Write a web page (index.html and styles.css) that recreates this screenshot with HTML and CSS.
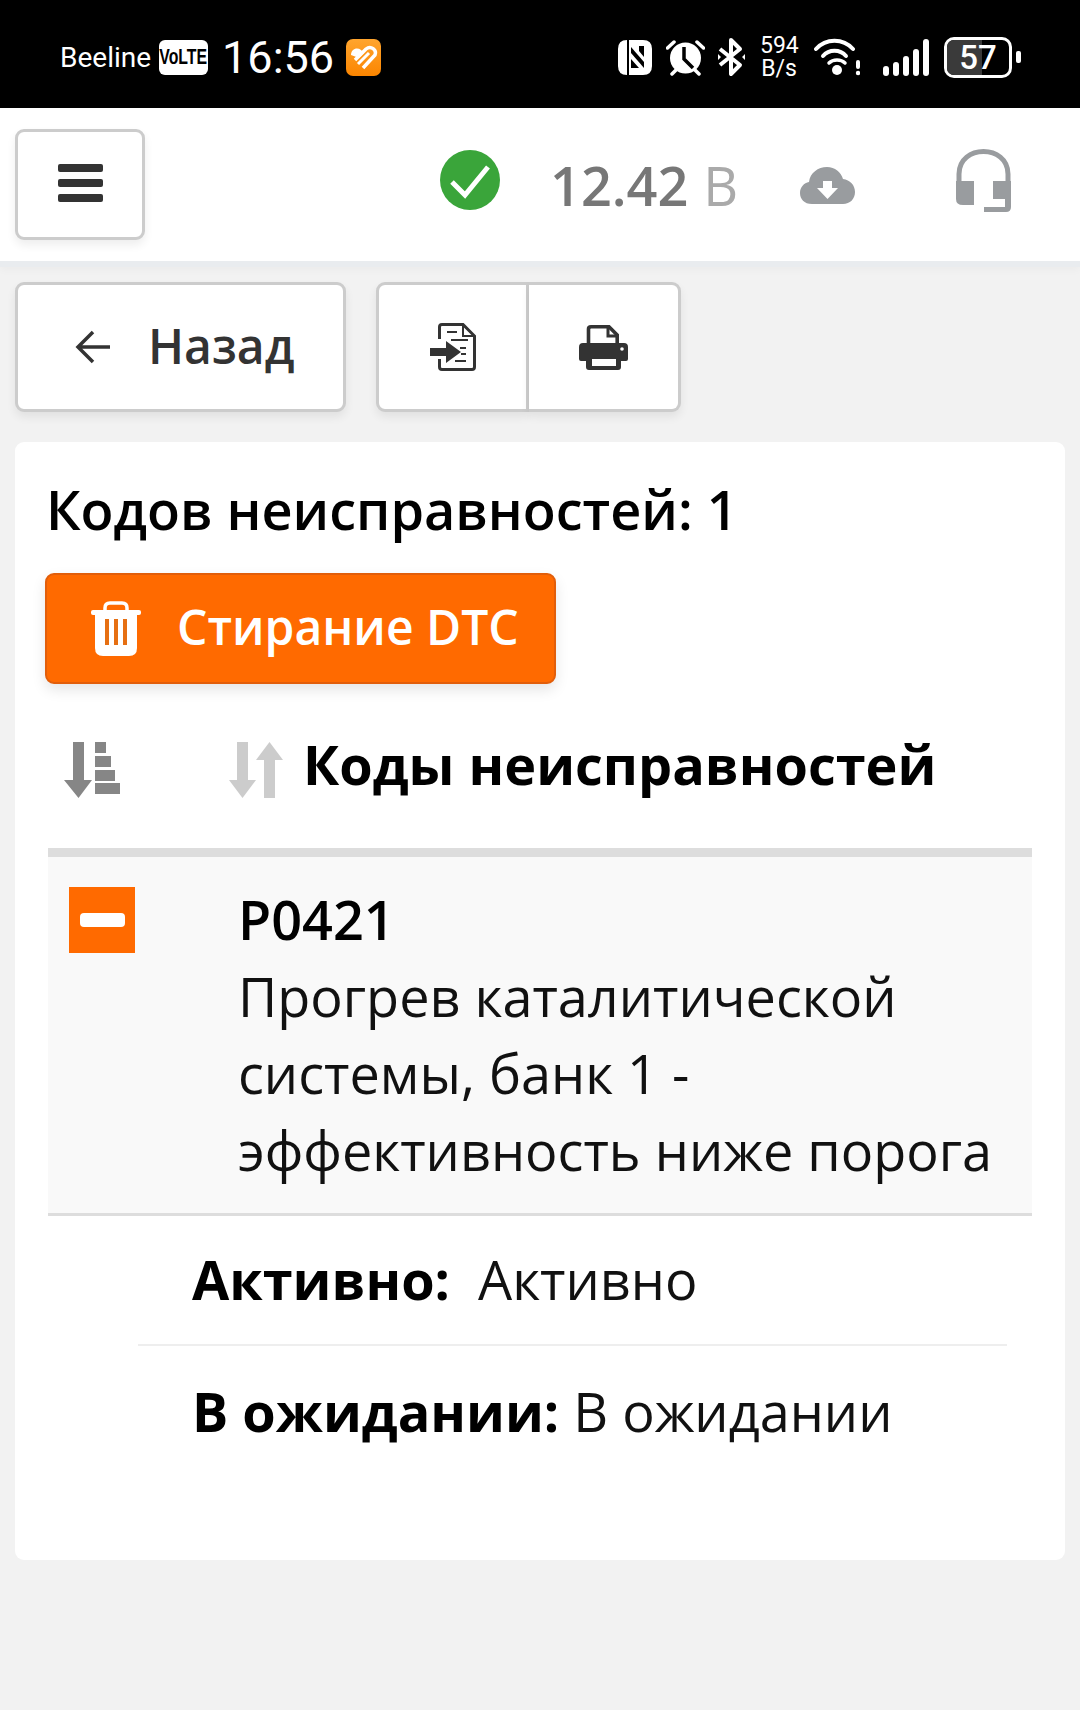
FILE: index.html
```html
<!DOCTYPE html>
<html lang="ru">
<head>
    <meta charset="UTF-8">
    <meta name="viewport" content="width=device-width, initial-scale=1.0">
    <title>Коды неисправностей</title>
    <link rel="stylesheet" href="styles.css">
</head>
<body>
    <!-- Phone status bar -->
    <div class="status-bar">
        <span class="carrier">Beeline</span>
        <span class="volte"><span>VoLTE</span></span>
        <span class="clock">16:56</span>
        <svg class="app-icon" width="35" height="37" viewBox="0 0 35 37">
            <defs>
                <linearGradient id="appGrad" x1="0" y1="0" x2="0" y2="1">
                    <stop offset="0" stop-color="#ffa52e"/>
                    <stop offset="1" stop-color="#fb8500"/>
                </linearGradient>
            </defs>
            <rect width="35" height="37" rx="7" fill="url(#appGrad)"/>
            <path d="M5 16 C5 10 11 8 15 11 L18 14 L13 19 Z" fill="#fff"/>
            <path d="M9 21 L20 10 C25 6 31 11 29 16 L17 29" fill="none" stroke="#fff" stroke-width="3.5"/>
            <path d="M12 25 L23 14" fill="none" stroke="#fff" stroke-width="3"/>
        </svg>

        <div class="status-icons">
            <svg class="ic-nfc" width="34" height="35" viewBox="0 0 34 35">
                <path d="M9 0 Q0 0 0 9 V26 Q0 35 9 35 Z" fill="#fff"/>
                <path d="M11 0 H25 Q34 0 34 9 V26 Q34 35 25 35 H11 Z" fill="#fff"/>
                <path d="M13 7 L26 22 V28 L13 13 Z" fill="#000"/>
                <path d="M13 19 L21 28 H13 Z M21 6 H26 V17 L21 11 Z" fill="#000"/>
            </svg>
            <svg class="ic-alarm" width="39" height="37" viewBox="0 0 39 37">
                <circle cx="19.5" cy="19" r="15.5" fill="#fff"/>
                <path d="M1.500 9 L8 3 M37.500 9 L31 3 M6 35 L10 31 M33 35 L29 31" stroke="#fff" stroke-width="3.5" stroke-linecap="round"/>
                <path d="M18 8 V20 L27 29" fill="none" stroke="#000" stroke-width="3.5"/>
            </svg>
            <svg class="ic-bt" width="27" height="40" viewBox="0 0 27 40">
                <path d="M2 12 L22 28 L13 37 V3 L22 12 L2 28" fill="none" stroke="#fff" stroke-width="4" stroke-linejoin="round"/>
                <path d="M0 17 L3 20 L0 23 Z M27 17 L24 20 L27 23 Z" fill="#fff"/>
            </svg>
            <div class="net-speed">594<br>B/s</div>
            <svg class="ic-wifi" width="46" height="38" viewBox="0 0 46 38">
                <path d="M2 11 C12 0 29 0 39 11" fill="none" stroke="#fff" stroke-width="4" stroke-linecap="round"/>
                <path d="M9 18 C15 11 26 11 32 18" fill="none" stroke="#fff" stroke-width="4" stroke-linecap="round"/>
                <circle cx="23" cy="32" r="5" fill="#fff"/>
                <path d="M15 25 C19 21 27 21 31 25" fill="none" stroke="#fff" stroke-width="3.5" stroke-linecap="round"/>
                <rect x="42" y="22" width="4" height="9" rx="2" fill="#fff"/>
                <circle cx="44" cy="35" r="2.2" fill="#fff"/>
            </svg>
            <div class="signal">
                <i class="bar-1"></i><i class="bar-2"></i><i class="bar-3"></i><i class="bar-4"></i><i class="bar-5"></i>
            </div>
            <div class="battery"><span class="battery-fill"></span><span class="battery-num">57</span></div>
            <span class="battery-nub"></span>
        </div>
    </div>

    <!-- App header -->
    <header class="app-header">
        <button class="btn menu-btn">
            <svg width="45" height="38" viewBox="0 0 45 38" fill="#333">
                <rect y="0" width="45" height="8" rx="2"/>
                <rect y="15" width="45" height="8" rx="2"/>
                <rect y="30" width="45" height="8" rx="2"/>
            </svg>
        </button>
        <svg class="ok-icon" width="60" height="60" viewBox="0 0 60 60">
            <circle cx="30" cy="30" r="30" fill="#3aa53a"/>
            <path d="M12 32 L25 45 L48 17" fill="none" stroke="#fff" stroke-width="5"/>
        </svg>
        <div class="voltage"><span>12.42</span> <span class="unit">В</span></div>
        <svg class="cloud-icon" width="55" height="37" viewBox="0 0 55 37">
            <path d="M12 37 C4 37 0 32 0 26 C0 20 4 16 9 15 C10 6 18 0 27 0 C35 0 41 5 43 12 C50 13 55 18 55 25 C55 32 50 37 43 37 Z" fill="#999c9f"/>
            <path d="M23 14 H32 V21 H38 L27.500 32 L17 21 H23 Z" fill="#fff"/>
        </svg>
        <svg class="headset-icon" width="55" height="66" viewBox="0 0 55 66">
            <path d="M3 44 V27 C3 -3 52 -3 52 27 V58" fill="none" stroke="#999c9f" stroke-width="5"/>
            <path d="M0 34 H18 V58 H7 Q0 58 0 52 Z" fill="#999c9f"/>
            <path d="M37 34 H55 V52 H37 Z" fill="#999c9f"/>
            <path d="M55 50 V60 Q55 65 50 65 H28 V60 H49 V50 Z" fill="#999c9f"/>
        </svg>
    </header>

    <!-- Toolbar -->
    <div class="toolbar">
        <button class="btn back-btn">
            <svg width="36" height="34" viewBox="0 0 36 34">
                <path d="M18 2 L3 17 L18 32 M3 17 H35" fill="none" stroke="#333" stroke-width="3.500"/>
            </svg>
            <span>Назад</span>
        </button>
        <div class="btn-group">
            <button class="btn group-btn">
                <svg width="46" height="48" viewBox="0 0 46 48">
                    <path d="M9.500 16 V4 Q9.500 1.500 12 1.500 H33 L44.500 13 V44 Q44.500 46.500 42 46.500 H12 Q9.500 46.500 9.500 44 V36" fill="none" stroke="#333" stroke-width="3"/>
                    <path d="M33 2 V13 H44" fill="none" stroke="#333" stroke-width="2"/>
                    <path d="M17 9 H27 M21 17 H38 M30 25 H36 M31 31 H36 M25 38 H36" stroke="#333" stroke-width="2"/>
                    <path d="M0 25 H16 V18 L31 29 L16 40 V33 H0 Z" fill="#333"/>
                </svg>
            </button>
            <button class="btn group-btn">
                <svg width="49" height="45" viewBox="0 0 49 45">
                    <path d="M9.500 20 V4 Q9.500 1.800 12 1.800 H30 L38.200 10 V20" fill="none" stroke="#333" stroke-width="3.600"/>
                    <path d="M29 2 V11 H38" fill="none" stroke="#333" stroke-width="3"/>
                    <path d="M4 18 H45 Q49 18 49 22 V34 Q49 36 47 36 H42 V42 Q42 45 39 45 H10 Q7 45 7 42 V36 H2 Q0 36 0 34 V22 Q0 18 4 18 Z" fill="#333"/>
                    <rect x="13" y="34" width="24" height="7" fill="#fff"/>
                    <circle cx="43" cy="24" r="1.800" fill="#fff"/>
                </svg>
            </button>
        </div>
    </div>

    <!-- DTC card -->
    <main class="card">
        <h2 class="card-title">Кодов неисправностей: 1</h2>
        <button class="clear-btn">
            <svg width="50" height="55" viewBox="0 0 50 55">
                <path d="M14 11 V7 Q14 2 19 2 H31 Q36 2 36 7 V11" fill="none" stroke="#fff" stroke-width="3.500"/>
                <rect y="9" width="50" height="5" rx="2" fill="#fff"/>
                <path d="M4 12 H46 V47 Q46 55 38 55 H12 Q4 55 4 47 Z" fill="#fff"/>
                <path d="M14 18 H18 V44 H14 Z M23 18 H27 V44 H23 Z M32 18 H36 V44 H32 Z" fill="#e66f12"/>
            </svg>
            <span>Стирание DTC</span>
        </button>

        <div class="table-head">
            <svg class="sort-first" width="56" height="56" viewBox="0 0 56 56" fill="#868686">
                <path d="M9 0 H20 V38 H28 L14.500 56 L0 38 H9 Z"/>
                <path d="M31 0 H42 V11 H31 Z M31 14 H47 V25 H31 Z M31 28 H51 V39 H31 Z M31 41 H56 V52 H31 Z"/>
            </svg>
            <svg class="sort-second" width="54" height="56" viewBox="0 0 54 56" fill="#cccccc">
                <path d="M8 0 H19 V38 H27 L13.500 56 L0 38 H8 Z"/>
                <path d="M35 56 H46 V18 H54 L40.500 0 L27 18 H35 Z"/>
            </svg>
            <span class="head-title">Коды неисправностей</span>
        </div>

        <div class="dtc-row">
            <span class="minus-box"><i></i></span>
            <div class="dtc-text">
                <div class="dtc-code">P0421</div>
                <div>Прогрев каталитической системы, банк 1 - эффективность ниже порога</div>
            </div>
        </div>

        <div class="detail-row first"><b>Активно:</b>&nbsp; Активно</div>
        <div class="detail-row second"><b>В ожидании:</b> В ожидании</div>
    </main>
</body>
</html>
```

FILE: styles.css
```css
* {
    box-sizing: border-box;
}

body {
    margin: 0;
    height: 1710px;
    overflow: hidden;
    background: #f2f2f2;
    font-family: "Open Sans", sans-serif;
    color: #000;
}

svg {
    display: block;
    flex: none;
}

/* status bar */
.status-bar {
    display: flex;
    align-items: center;
    height: 108px;
    padding: 6px 59px 0 60px;
    background: #000;
    color: #fff;
}

.carrier {
    font-family: Roboto, sans-serif;
    font-size: 28px;
    margin-right: 8px;
}

.volte {
    display: flex;
    align-items: center;
    justify-content: center;
    width: 49px;
    height: 35px;
    border-radius: 6px;
    background: #fff;
    color: #000;
    font-family: "Liberation Sans", sans-serif;
    font-size: 22px;
    font-weight: bold;
    margin-right: 14px;
    overflow: hidden;
}

.volte span {
    transform: scaleX(0.72);
}

.clock {
    font-family: Roboto, sans-serif;
    font-size: 45px;
    margin-right: 12px;
}

.status-icons {
    display: flex;
    align-items: center;
    margin-left: auto;
}

.ic-nfc { margin-right: 14px; }
.ic-alarm { margin-right: 13px; }
.ic-bt { margin-right: 15px; }
.ic-wifi { margin-right: 23px; }

.net-speed {
    width: 38px;
    margin-right: 16px;
    font-family: Roboto, sans-serif;
    font-size: 23px;
    line-height: 23px;
    text-align: center;
}

.signal {
    display: flex;
    align-items: flex-end;
    gap: 4px;
    height: 37px;
    margin-right: 15px;
}

.signal i {
    width: 6px;
    border-radius: 3px;
    background: #fff;
}

.bar-1 { height: 10px; }
.bar-2 { height: 14px; }
.bar-3 { height: 20px; }
.bar-4 { height: 27px; }
.bar-5 { height: 37px; }

.battery {
    position: relative;
    width: 68px;
    height: 41px;
    border: 3px solid #fff;
    border-radius: 10px;
    overflow: hidden;
}

.battery-fill {
    display: block;
    width: 57%;
    height: 100%;
    background: #3a3a3a;
}

.battery-num {
    position: absolute;
    inset: 0;
    text-align: center;
    font-family: Roboto, sans-serif;
    font-size: 33px;
    font-weight: 500;
    line-height: 35px;
}

.battery-nub {
    width: 5px;
    height: 12px;
    margin-left: 4px;
    border-radius: 2px;
    background: #fff;
}

/* header */
.app-header {
    display: flex;
    align-items: center;
    height: 159px;
    padding: 0 15px;
    background: #fff;
    border-bottom: 6px solid #e9ecef;
    box-shadow: 0 3px 8px rgba(0, 0, 0, 0.03);
}

.btn {
    background: #fff;
    border: 3px solid #ccc;
    border-radius: 9px;
    box-shadow: 0 5px 10px rgba(0, 0, 0, 0.07);
    color: #333;
    font-family: inherit;
    display: flex;
    align-items: center;
    justify-content: center;
    padding: 0;
}

.menu-btn {
    width: 130px;
    height: 111px;
    margin-right: 295px;
    padding-bottom: 4px;
}

.ok-icon { margin-right: 50px; margin-top: -10px; }

.voltage {
    display: flex;
    gap: 15px;
    font-size: 54px;
    font-weight: 600;
    color: #777;
    margin-right: 62px;
    line-height: 1;
}

.voltage .unit {
    color: #aaa;
    font-weight: 400;
}

.cloud-icon { margin-right: 101px; margin-top: 2px; }
.headset-icon { margin-top: -10px; }

/* toolbar */
.toolbar {
    display: flex;
    gap: 30px;
    padding: 15px 15px 30px;
}

.back-btn {
    justify-content: flex-start;
    width: 331px;
    height: 130px;
    gap: 37px;
    padding: 0 0 4px 57px;
    font-size: 48px;
    font-weight: 600;
}

.back-btn svg {
    margin-top: 4px;
}

.btn-group {
    display: flex;
}

.group-btn {
    width: 153px;
    height: 130px;
    border-radius: 9px 0 0 9px;
}

.group-btn + .group-btn {
    width: 152px;
    border-left: 0;
    border-radius: 0 9px 9px 0;
}

/* card */
.card {
    width: 1050px;
    height: 1118px;
    margin-left: 15px;
    padding: 30px 33px 0;
    background: #fff;
    border-radius: 9px;
}

.card-title {
    margin: 0 0 26px -2px;
    font-size: 54px;
    font-weight: 600;
    line-height: 75px;
}

.clear-btn {
    display: flex;
    align-items: center;
    gap: 36px;
    width: 511px;
    height: 111px;
    margin-left: -3px;
    padding: 0 0 0 44px;
    background: #ff6a00;
    border: 2px solid #e25e0a;
    border-radius: 9px;
    box-shadow: 0 6px 14px rgba(0, 0, 0, 0.1);
    color: #fff;
    font-family: inherit;
    font-size: 48px;
    font-weight: 600;
}

.clear-btn span {
    margin-bottom: 4px;
}

.table-head {
    display: flex;
    align-items: center;
    height: 173px;
    padding: 8px 0 0 16px;
    border-bottom: 9px solid #ddd;
}

.sort-first { margin-right: 109px; }
.sort-second { margin-right: 20px; }

.head-title {
    margin-bottom: 12px;
    font-size: 54px;
    font-weight: bold;
}

.dtc-row {
    display: flex;
    padding: 24px 0 24px 21px;
    background: #f9f9f9;
    border-bottom: 3px solid #ddd;
    font-size: 54px;
    line-height: 77px;
    color: #111;
}

.minus-box {
    display: flex;
    align-items: center;
    justify-content: center;
    flex: none;
    width: 66px;
    height: 66px;
    margin: 6px 103px 0 0;
    background: #ff6a00;
}

.minus-box i {
    width: 45px;
    height: 14px;
    border-radius: 4px;
    background: #fff;
}

.dtc-code {
    color: #000;
    font-weight: 600;
}

.detail-row {
    margin: 0 25px 0 90px;
    padding-left: 54px;
    height: 130px;
    font-size: 54px;
    line-height: 127px;
    color: #111;
}

.detail-row.first {
    border-bottom: 2px solid #eee;
}

.detail-row.second {
    padding-top: 2px;
}

.detail-row b {
    color: #000;
}
```
